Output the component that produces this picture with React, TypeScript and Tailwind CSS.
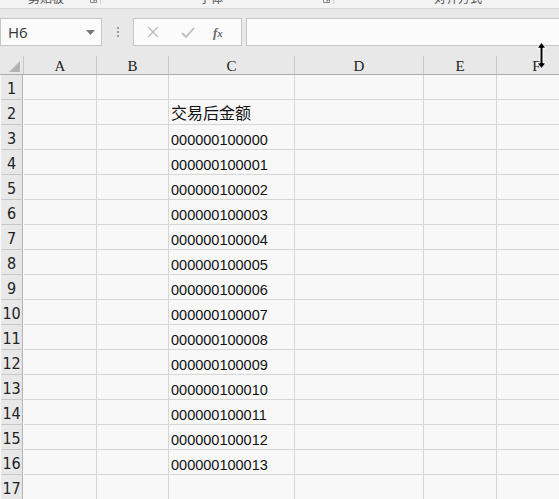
import { useMemo } from "react";

// largeurs des colonnes, en pixels
const COLS = [
  { name: "A", w: "w-[73px]" },
  { name: "B", w: "w-[72px]" },
  { name: "C", w: "w-[126px]" },
  { name: "D", w: "w-[129px]" },
  { name: "E", w: "w-[73px]" },
  { name: "F", w: "w-[80px]" },
];

const cellText = (row: number, col: string) => {
  if (col !== "C") return "";
  if (row === 2) return "交易后金额";
  if (row >= 3 && row <= 16) return "0000001000" + String(row - 3).padStart(2, "0");
  return "";
};

function Launcher() {
  return (
    <svg width="7" height="7" viewBox="0 0 7 7" className="text-[#8a8a8a]">
      <path d="M0.5 0.5h6v6h-6z" fill="none" stroke="currentColor" />
      <path d="M2 2l3 3M5 3v2H3" fill="none" stroke="currentColor" />
    </svg>
  );
}

function RibbonStrip() {
  return (
    <div className="h-[9px] bg-[#f3f3f3] border-b border-[#d6d6d6] overflow-hidden relative text-[12px] leading-none text-[#555] font-['Noto_Sans_CJK_SC',sans-serif]">
      <div className="flex items-end h-full -mt-[4px]">
        <span className="ml-[28px] w-[62px]">剪贴板</span>
        <span className="mb-[1px]"><Launcher /></span>
        <span className="ml-[3px] w-px h-[14px] bg-[#d0d0d0]" />
        <span className="ml-[98px] w-[120px]">字体</span>
        <span className="mb-[1px] ml-[4px]"><Launcher /></span>
        <span className="ml-[3px] w-px h-[14px] bg-[#d0d0d0]" />
        <span className="ml-[100px]">对齐方式</span>
      </div>
    </div>
  );
}

function FormulaBar() {
  return (
    <div className="bg-[#e8e8e8] pt-[9px] pb-[10px] flex items-stretch h-[47px]">
      <div className="w-[102px] bg-[#fbfbfb] border border-[#c6c6c6] flex items-center justify-between pl-[7px] pr-[6px]">
        <span className="text-[15px] text-[#333] font-['Open_Sans',sans-serif]">H6</span>
        <svg width="9" height="5" viewBox="0 0 9 5">
          <path d="M0 0h9L4.5 5z" fill="#777" />
        </svg>
      </div>
      <div className="w-[31px] flex flex-col items-center justify-center gap-[2px]">
        <span className="w-[2px] h-[2px] bg-[#9a9a9a]" />
        <span className="w-[2px] h-[2px] bg-[#9a9a9a]" />
        <span className="w-[2px] h-[2px] bg-[#9a9a9a]" />
      </div>
      <div className="w-[109px] bg-[#fbfbfb] border border-[#c6c6c6] flex items-center">
        <svg width="12" height="12" viewBox="0 0 12 12" className="ml-[13px]">
          <path d="M1 1l10 10M11 1L1 11" stroke="#bdbdbd" strokeWidth="1.4" />
        </svg>
        <svg width="14" height="11" viewBox="0 0 14 11" className="ml-[22px]">
          <path d="M1 6l4 4L13 1" fill="none" stroke="#bdbdbd" strokeWidth="1.8" />
        </svg>
        <span className="ml-[18px] text-[13px] italic text-[#6a6a6a] font-['Liberation_Serif',serif] font-bold leading-none">
          f<span className="text-[11px]">x</span>
        </span>
      </div>
      <div className="ml-[4px] flex-1 bg-[#fbfbfb] border-y border-l border-[#c6c6c6]" />
    </div>
  );
}

function ResizeCursor() {
  return (
    <svg width="11" height="27" viewBox="0 0 11 27" className="absolute left-[536px] top-[42px]">
      <path
        d="M5.5 0.5L10 6H7v15h3l-4.5 5.5L1 21h3V6H1z"
        fill="#000"
        stroke="#fff"
        strokeWidth="1"
        strokeLinejoin="round"
      />
      <path d="M5.5 3L8 5.5H3zM5.5 24L8 21.5H3z" fill="#000" />
    </svg>
  );
}

export default function App() {
  const rows = useMemo(() => Array.from({ length: 17 }, (_, i) => i + 1), []);

  return (
    <div className="w-[559px] h-[499px] overflow-hidden relative bg-[#f8f8f8] select-none">
      <RibbonStrip />
      <FormulaBar />

      {/* en-tête des colonnes */}
      <div className="flex h-[19px] bg-[#e8e8e8] border-b border-[#ababab] whitespace-nowrap">
        <div className="w-[24px] shrink-0 border-r border-[#c8c8c8] flex items-end justify-end pr-[3px] pb-[2px]">
          <svg width="11" height="11" viewBox="0 0 11 11">
            <path d="M11 0v11H0z" fill="#b4b4b4" />
          </svg>
        </div>
        {COLS.map(c => (
          <div
            key={c.name}
            className={`${c.w} shrink-0 border-r border-[#c8c8c8] flex items-center justify-center text-[15px] text-[#222] font-['Liberation_Serif',serif] pt-[3px]`}
          >
            {c.name}
          </div>
        ))}
      </div>

      {/* lignes */}
      {rows.map(r => (
        <div key={r} className="flex h-[25px] whitespace-nowrap">
          <div className="w-[24px] shrink-0 bg-[#e8e8e8] border-r border-[#ababab] border-b border-b-[#c8c8c8] flex items-end justify-center text-[16px] text-[#222] font-['DejaVu_Sans',sans-serif] leading-[20px] scale-x-90">
            {r}
          </div>
          {COLS.map(c => {
            const t = cellText(r, c.name);
            return (
              <div
                key={c.name}
                className={`${c.w} shrink-0 border-r border-b border-[#d6d6d6] flex items-end pl-[2px] ${r === 2 ? "pb-[3px]" : "pb-[1px]"}`}
              >
                {t && (
                  <span
                    className={
                      r === 2
                        ? "text-[16px] leading-[18px] text-[#111] font-['Noto_Sans_CJK_SC',sans-serif]"
                        : "text-[14.5px] leading-[16px] text-[#111] font-['Liberation_Sans',sans-serif]"
                    }
                  >
                    {t}
                  </span>
                )}
              </div>
            );
          })}
        </div>
      ))}

      <ResizeCursor />
    </div>
  );
}
